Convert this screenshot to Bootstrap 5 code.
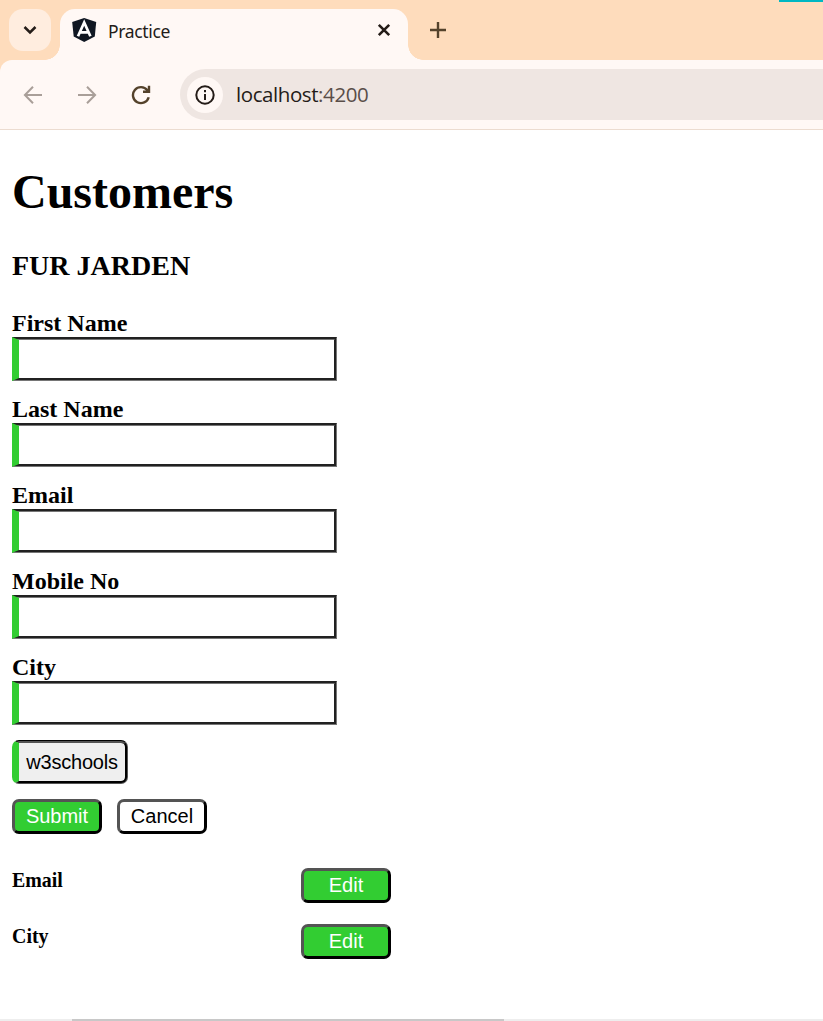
<!DOCTYPE html>
<html lang="en">
<head>
<meta charset="utf-8">
<meta name="viewport" content="width=device-width, initial-scale=1">
<title>Practice</title>
<link rel="stylesheet" href="https://cdn.jsdelivr.net/npm/bootstrap@5.3.0/dist/css/bootstrap.min.css">
<style>
  body { font-family: "Liberation Serif", serif; color: #000; background: #fff; height: 1021px; }
  .chrome-ui { font-family: "Open Sans", sans-serif; color: #241c18; }
  .tab-strip { height: 60px; background: #fedcbc; }
  .accent-line { top: 0; right: 0; width: 44px; height: 2px; background: #00b7c3; }
  .tab-search { width: 42px; height: 42px; margin: 9px 0 0 9px; border-radius: 14px; background: #ffeddf; }
  .open-tab { width: 348px; height: 51px; margin: 9px 0 0 9px; padding-left: 12px; border-radius: 15px 15px 0 0; background: #fff8f5; }
  .open-tab::before, .open-tab::after { content: ""; position: absolute; bottom: 0; width: 15px; height: 15px; }
  .open-tab::before { left: -15px; background: radial-gradient(circle at 0 0, transparent 14.5px, #fff8f5 15px); }
  .open-tab::after { right: -15px; background: radial-gradient(circle at 100% 0, transparent 14.5px, #fff8f5 15px); }
  .tab-icon { margin-top: 9px; }
  .tab-title { font-family: "Noto Sans", "Open Sans", sans-serif; font-size: 17.5px; line-height: 24px; margin: 10px 0 0 11px; letter-spacing: -.35px; }
  .tab-close { margin: 14px 16px 0 auto; }
  .new-tab { margin: 21px 0 0 21px; }
  .toolbar-row { height: 70px; background: #fff8f5; border-bottom: 1px solid #ecdcd0; border-top-left-radius: 12px; padding-left: 23px; }
  .toolbar-wrap { background: #fedcbc; }
  .tool-icon { margin-left: 34px; }
  .address { height: 51px; margin-left: 29px; padding-left: 7px; border-radius: 26px 0 0 26px; background: #efe6e2; }
  .site-info { width: 36px; height: 36px; background: #fff8f5; }
  .url { font-size: 20.5px; line-height: 28px; margin: 0 0 2px 13px; letter-spacing: -.42px; }
  .port { color: #5a4e49; }
  .page { padding: 0 12px; }
  h1 { font-size: 48px; line-height: 55px; font-weight: 700; margin: 34px 0 0; }
  h3 { font-size: 28px; line-height: 32px; font-weight: 700; margin: 31px 0 27px; }
  .field { height: 86px; }
  .field label { font-size: 24px; line-height: 28px; font-weight: 700; }
  .field input { width: 325px; height: 44px; border: 3px groove #767676; border-left: 7px solid #32cd32; background: #fff; outline: 0; }
  button { font-family: "Liberation Sans", sans-serif; font-size: 20px; line-height: 22px; }
  .btn-school { width: 116px; height: 44px; margin-top: 1px; padding: 0; border: 3px groove #000; border-left: 7px solid #32cd32; border-radius: 7px; background: #efefef; color: #000; letter-spacing: -.22px; }
  .btn-form { width: 90px; height: 35px; padding: 0 0 1px; border: 3px outset #000; border-radius: 7px; background: #fff; color: #000; }
  .btn-lime { background: #32cd32; color: #fff; }
  .form-actions { gap: 15px; margin-top: 15px; }
  .edit-list { padding-top: 34px; }
  .edit-row { width: 379px; height: 56px; }
  .edit-row h5 { font-size: 19.92px; line-height: 25px; font-weight: 700; margin: 0; }
  .scroll-track { height: 2px; background: #eee; }
  .scroll-thumb { width: 432px; margin-left: 72px; background: #c8c8c8; }
</style>
</head>
<body class="d-flex flex-column overflow-hidden">
<header class="chrome-ui">
  <div class="tab-strip d-flex position-relative">
    <div class="accent-line position-absolute"></div>
    <div class="tab-search d-flex align-items-center justify-content-center">
      <svg width="14" height="10" viewBox="0 0 14 10" fill="none" stroke="#241c18" stroke-width="2.5"><path d="M1.5 2 7 7.4 12.5 2"/></svg>
    </div>
    <div class="open-tab d-flex align-items-start position-relative">
      <svg class="tab-icon" width="25" height="25" viewBox="0 0 25 25"><path fill="#101722" d="M12.200 0 24.200 4 22.800 18.500 12.200 24 1.700 18.500 .2 4Z"/><path fill="none" stroke="#fff" stroke-width="2.700" d="M6 18.200 12.200 4.500 18.400 18.200M8.500 14.300H16"/></svg>
      <span class="tab-title">Practice</span>
      <svg class="tab-close" width="16" height="14" viewBox="0 0 16 14" stroke="#241c18" stroke-width="2.600"><path d="m2.800 1.800 10.400 10.400M13.200 1.800 2.800 12.200"/></svg>
    </div>
    <svg class="new-tab" width="18" height="18" viewBox="0 0 18 18" stroke="#54422b" stroke-width="2.400"><path d="M9 1v16M1 9h16"/></svg>
  </div>
  <div class="toolbar-wrap">
    <div class="toolbar-row d-flex align-items-center">
      <svg width="20" height="20" viewBox="0 0 20 20" fill="none" stroke="#a99f99" stroke-width="2"><path d="M19 10H2.500M10 1.700 1.900 10 10 18.300"/></svg>
      <svg class="tool-icon" width="20" height="20" viewBox="0 0 20 20" fill="none" stroke="#a99f99" stroke-width="2"><path d="M1 10h16.500M10 1.700 18.100 10 10 18.300"/></svg>
      <svg class="tool-icon" width="20" height="20" viewBox="0 0 20 20" fill="none" stroke="#54422b" stroke-width="2.400"><path d="M16.300 5.200A8 8 0 1 0 17.700 12.200"/><path fill="#54422b" stroke="none" d="M16.800 .8H19.200V8H12V5.600H14.800L16.800 3.600Z"/></svg>
      <div class="address flex-fill d-flex align-items-center">
        <span class="site-info rounded-circle d-flex align-items-center justify-content-center">
          <svg width="20" height="20" viewBox="0 0 20 20" fill="none" stroke="#241c18" stroke-width="2"><circle cx="10" cy="10" r="8.700"/><path d="M10 9v6M10 5v2.200"/></svg>
        </span>
        <span class="url">localhost<span class="port">:4200</span></span>
      </div>
    </div>
  </div>
</header>
<main class="page flex-fill">
  <h1>Customers</h1>
  <h3>FUR JARDEN</h3>
  <form>
    <div class="field d-flex flex-column"><label for="first">First Name</label><input id="first" type="text"></div>
    <div class="field d-flex flex-column"><label for="last">Last Name</label><input id="last" type="text"></div>
    <div class="field d-flex flex-column"><label for="email">Email</label><input id="email" type="text"></div>
    <div class="field d-flex flex-column"><label for="mobile">Mobile No</label><input id="mobile" type="text"></div>
    <div class="field d-flex flex-column"><label for="city">City</label><input id="city" type="text"></div>
    <button class="btn-school d-block" type="button">w3schools</button>
    <div class="form-actions d-flex">
      <button class="btn-form btn-lime" type="button">Submit</button>
      <button class="btn-form" type="button">Cancel</button>
    </div>
  </form>
  <section class="edit-list">
    <div class="edit-row d-flex justify-content-between align-items-start"><h5>Email</h5><button class="btn-form btn-lime" type="button">Edit</button></div>
    <div class="edit-row d-flex justify-content-between align-items-start"><h5>City</h5><button class="btn-form btn-lime" type="button">Edit</button></div>
  </section>
</main>
<div class="scroll-track d-flex"><div class="scroll-thumb"></div></div>
<script src="https://cdn.jsdelivr.net/npm/bootstrap@5.3.0/dist/js/bootstrap.bundle.min.js"></script>
</body>
</html>
